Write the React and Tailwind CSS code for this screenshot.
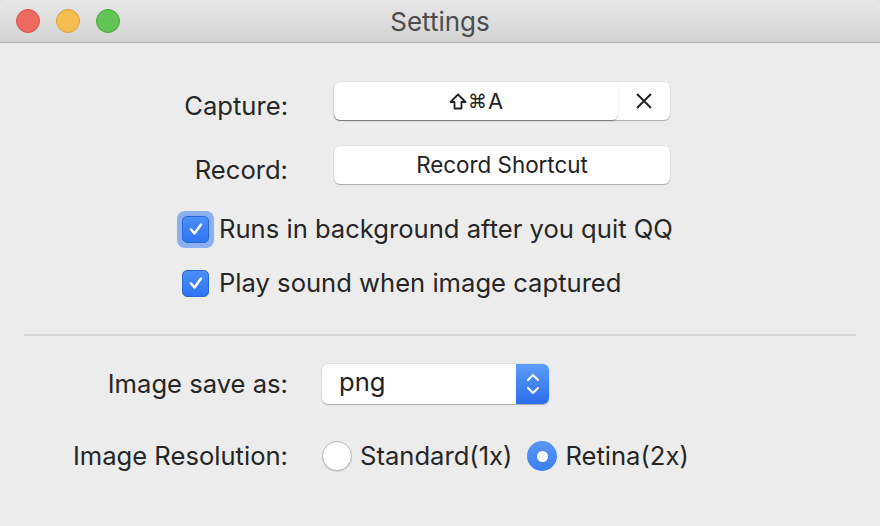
import React from 'react'

const font = { fontFamily: 'Inter, "Noto Sans", sans-serif' }

function Check() {
    return (
        <svg width="18" height="18" viewBox="0 0 18 18" fill="none">
            <path d="M4 9.5 L7.5 13.5 L14 4.5" stroke="white" strokeWidth="2.4" strokeLinecap="round" strokeLinejoin="round" />
        </svg>
    )
}

function Checkbox({ focused }) {
    const box = (
        <div className="w-[27px] h-[27px] rounded-[5px] bg-gradient-to-b from-[#4b8ff8] to-[#2f74ef] border border-[#2b66d6] flex items-center justify-center">
            <Check />
        </div>
    )
    if (!focused) return box
    return (
        <div className="rounded-[8px] bg-[#8bb0f2] p-[5px] -m-[5px]">{box}</div>
    )
}

// shift key glyph
function ShiftKey() {
    return (
        <svg width="18" height="17" viewBox="0 0 18 17" fill="none">
            <path d="M9 1.5 L16.5 9 L12.5 9 L12.5 15.5 L5.5 15.5 L5.5 9 L1.5 9 Z" stroke="#222" strokeWidth="1.8" strokeLinejoin="round" />
        </svg>
    )
}

const btnShadow = 'shadow-[0_1px_1px_rgba(0,0,0,0.25),0_0_0_0.5px_rgba(0,0,0,0.08)]'

export default function App() {
    return (
        <div className="w-[880px] h-[526px] bg-[#e4e4e4] overflow-hidden" style={font}>
            <div className="w-full h-full bg-[#ececec] rounded-t-[10px] flex flex-col text-[#262626]">
                {/* title bar */}
                <div className="h-[43px] shrink-0 rounded-t-[10px] bg-gradient-to-b from-[#e8e8e8] to-[#d3d3d3] border-b border-[#b4b4b4] grid grid-cols-[1fr_auto_1fr] items-center">
                    <div className="flex items-center gap-[16px] pl-[16px]">
                        <div className="w-[24px] h-[24px] rounded-full bg-[#ee6a5f] border border-[#d65247]" />
                        <div className="w-[24px] h-[24px] rounded-full bg-[#f5bd4f] border border-[#d9a03a]" />
                        <div className="w-[24px] h-[24px] rounded-full bg-[#61c454] border border-[#4aa73e]" />
                    </div>
                    <div className="text-[26px] leading-[30px] text-[#4c4c4c] pt-[2px]">Settings</div>
                    <div />
                </div>

                {/* shortcuts */}
                <div className="flex h-[38px] mt-[39px]">
                    <div className="w-[288px] shrink-0 text-right text-[25.6px] pt-[9px] leading-[29px]">Capture:</div>
                    <div className={`ml-[46px] flex h-[38px] w-[336px] bg-white rounded-[6px] ${btnShadow}`}>
                        <div className="w-[284px] h-full rounded-[6px] shadow-[0_1px_1px_rgba(0,0,0,0.3)] flex items-center justify-center gap-[1px] text-[22px] text-[#222]">
                            <ShiftKey />
                            <span style={{ fontFamily: '"DejaVu Sans", sans-serif' }} className="text-[19px]">⌘</span>
                            <span>A</span>
                        </div>
                        <div className="flex-1 flex items-center justify-center">
                            <svg width="18" height="18" viewBox="0 0 18 18">
                                <path d="M2 2 L16 16 M16 2 L2 16" stroke="#222" strokeWidth="2" />
                            </svg>
                        </div>
                    </div>
                </div>

                <div className="flex h-[38px] mt-[26px]">
                    <div className="w-[288px] shrink-0 text-right text-[25.6px] pt-[9px] leading-[29px]">Record:</div>
                    <div className={`ml-[46px] h-[38px] w-[336px] bg-white rounded-[6px] ${btnShadow} flex items-center justify-center text-[22.4px] text-[#222]`}>
                        Record Shortcut
                    </div>
                </div>

                {/* options */}
                <div className="flex items-center h-[28px] gap-[10px] pl-[182px] mt-[31px]">
                    <Checkbox focused />
                    <span className="text-[25.6px] leading-[28px]">Runs in background after you quit QQ</span>
                </div>
                <div className="flex items-center h-[28px] gap-[10px] pl-[182px] mt-[26px]">
                    <Checkbox />
                    <span className="text-[25.6px] leading-[28px]">Play sound when image captured</span>
                </div>

                <div className="mx-[24px] mt-[37px] h-[2px] shrink-0 bg-[#d6d6d6]" />

                {/* image options */}
                <div className="flex h-[40px] mt-[28px]">
                    <div className="w-[288px] shrink-0 text-right text-[25.6px] leading-[40px]">Image save as:</div>
                    <div className={`ml-[34px] flex h-[40px] w-[227px] bg-white rounded-[6px] ${btnShadow}`}>
                        <div className="flex-1 flex items-center pl-[17px] text-[25.6px] text-[#222] pb-[3px]">png</div>
                        <div className="w-[33px] h-full rounded-r-[6px] bg-gradient-to-b from-[#5d9cf8] to-[#2d6ceb] flex items-center justify-center">
                            <svg width="16" height="26" viewBox="0 0 16 26" fill="none">
                                <path d="M3 9 L8 4 L13 9 M3 17 L8 22 L13 17" stroke="white" strokeWidth="2" strokeLinecap="round" strokeLinejoin="round" />
                            </svg>
                        </div>
                    </div>
                </div>

                <div className="flex h-[30px] mt-[37px]">
                    <div className="w-[288px] shrink-0 text-right text-[25.6px] leading-[30px]">Image Resolution:</div>
                    <div className="ml-[34px] flex items-center gap-[8px]">
                        <div className="w-[30px] h-[30px] rounded-full bg-white border border-[#b9b9b9] shadow-[0_1px_1px_rgba(0,0,0,0.12)]" />
                        <span className="text-[25.6px] leading-[30px]">Standard(1x)</span>
                        <div className="ml-[7px] w-[30px] h-[30px] rounded-full bg-gradient-to-b from-[#5b97f6] to-[#3a7ef1] flex items-center justify-center">
                            <div className="w-[11px] h-[11px] rounded-full bg-white" />
                        </div>
                        <span className="text-[25.6px] leading-[30px]">Retina(2x)</span>
                    </div>
                </div>
            </div>
        </div>
    )
}
